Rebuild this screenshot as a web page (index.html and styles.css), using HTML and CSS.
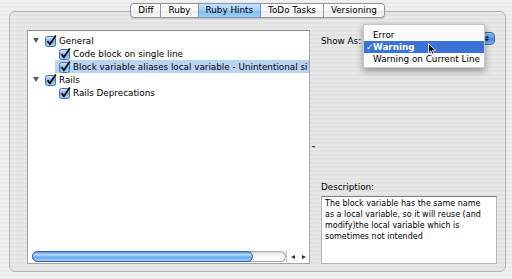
FILE: index.html
```html
<!DOCTYPE html>
<html lang="en">
<head>
  <meta charset="UTF-8" />
  <meta name="viewport" content="width=device-width, initial-scale=1.0"/>
  <title>Ruby Hints</title>
  <link rel="stylesheet" href="styles.css">
</head>
<body>
  <svg class="defs" width="0" height="0">
    <defs>
      <linearGradient id="boxFill" x1="0" y1="0" x2="0" y2="1">
        <stop offset="0" stop-color="#dcedfc"/>
        <stop offset="0.5" stop-color="#78b2ec"/>
        <stop offset="1" stop-color="#aad4fb"/>
      </linearGradient>
      <symbol id="check" viewBox="0 0 12 12">
        <rect x="0.5" y="1.5" width="10" height="10" rx="2" fill="url(#boxFill)" stroke="#4d73a6"/>
        <path d="M2.6 6.2 L4.9 9.3 L10.8 0.6" fill="none" stroke="#000" stroke-width="1.7"/>
      </symbol>
      <symbol id="tri" viewBox="0 0 7 6">
        <path d="M0 0 H7 L3.5 6 Z" fill="#5c5c5c"/>
      </symbol>
    </defs>
  </svg>

  <div class="panel">
    <div class="tabs">
      <span class="tab">Diff</span>
      <span class="tab">Ruby</span>
      <span class="tab selected">Ruby Hints</span>
      <span class="tab">ToDo Tasks</span>
      <span class="tab">Versioning</span>
    </div>

    <div class="content">
      <div class="outline">
        <div class="rows">
          <div class="row">
            <svg class="tri"><use href="#tri"/></svg>
            <svg class="cb"><use href="#check"/></svg>
            <span>General</span>
          </div>
          <div class="row child">
            <svg class="cb"><use href="#check"/></svg>
            <span>Code block on single line</span>
          </div>
          <div class="row child selected">
            <svg class="cb"><use href="#check"/></svg>
            <span>Block variable aliases local variable - Unintentional si</span>
          </div>
          <div class="row">
            <svg class="tri"><use href="#tri"/></svg>
            <svg class="cb"><use href="#check"/></svg>
            <span>Rails</span>
          </div>
          <div class="row child">
            <svg class="cb"><use href="#check"/></svg>
            <span>Rails Deprecations</span>
          </div>
        </div>
        <div class="hscroll">
          <div class="track"><div class="thumb"></div></div>
          <div class="arrows">
            <span class="arr left"></span>
            <span class="arr right"></span>
          </div>
        </div>
      </div>

      <div class="splitter"><span class="grip"></span></div>

      <div class="side">
        <div class="show-as">
          <span class="label">Show As:</span>
          <div class="popup">
            <span class="popup-end"><i class="up"></i><i class="down"></i></span>
            <ul class="menu">
              <li>Error</li>
              <li class="active">Warning</li>
              <li>Warning on Current Line</li>
              <svg class="cursor" viewBox="0 0 8 12">
                <path d="M0.5 0.5 V10 L2.8 7.8 L4.3 11.3 L5.8 10.6 L4.4 7.3 L7.5 7.3 Z" fill="#000" stroke="#fff" stroke-width="0.8"/>
              </svg>
            </ul>
          </div>
        </div>
        <div class="desc">
          <div class="label">Description:</div>
          <div class="desc-box">
            The block variable has the same name<br>
            as a local variable, so it will reuse (and<br>
            modify)the local variable which is<br>
            sometimes not intended
          </div>
        </div>
      </div>
    </div>
  </div>
</body>
</html>
```

FILE: styles.css
```css
body {
  margin: 0;
  width: 512px;
  height: 279px;
  overflow: hidden;
  font-family: "DejaVu Sans", sans-serif;
  font-size: 8.8px;
  color: #000;
  background: repeating-linear-gradient(#f0f0f0 0 2px, #eaeaea 2px 4px);
}
.defs {
  position: absolute;
}
.panel {
  margin: 11px 6px 0 9px;
  height: 261px;
  box-sizing: border-box;
  border: 1px solid #b4b4b4;
  border-radius: 6px;
  background: repeating-linear-gradient(#e8e8e8 0 2px, #e2e2e2 2px 4px);
}

/* segmented tabs */
.tabs {
  display: flex;
  justify-content: center;
  margin-top: -9px;
  height: 15px;
}
.tab {
  padding: 0 7px;
  line-height: 13px;
  border: 1px solid #959595;
  border-left: none;
  background: linear-gradient(#ffffff, #f6f6f6 50%, #ebebeb 51%, #f7f7f7);
  box-shadow: 0 1px 1px rgba(0,0,0,0.12);
}
.tab:first-child {
  border-left: 1px solid #959595;
  border-radius: 4px 0 0 4px;
}
.tab:last-child {
  border-radius: 0 4px 4px 0;
}
.tab.selected {
  background: linear-gradient(#c9e3fb, #a2cdf6 50%, #7db8f0 51%, #a0d0fb);
  border-color: #7f97b4;
}

/* main area */
.content {
  display: flex;
  padding: 12px 0 0 17px;
}
.outline {
  width: 283px;
  height: 234px;
  box-sizing: border-box;
  border: 1px solid #a4a4a4;
  border-top-color: #8c8c8c;
  background: #fff;
  display: flex;
  flex-direction: column;
}
.rows {
  flex: 1;
  padding-top: 3px;
}
.row {
  display: flex;
  align-items: center;
  height: 13px;
  padding-left: 5px;
  white-space: nowrap;
  overflow: hidden;
}
.row.child {
  margin-left: 27px;
  padding-left: 4px;
}
.row.selected {
  background: #b9d4f3;
}
.tri {
  width: 6px;
  height: 5px;
  margin-right: 6px;
  flex: none;
}
.cb {
  width: 12px;
  height: 12px;
  margin-right: 2px;
  flex: none;
}

/* horizontal scroller */
.hscroll {
  display: flex;
  align-items: center;
  height: 11px;
  margin: 0 0 1px 4px;
}
.track {
  width: 255px;
  height: 11px;
  border-radius: 6px;
  background: linear-gradient(#cfcfcf, #f4f4f4 35%, #ffffff);
  box-shadow: inset 0 0 0 1px #a9a9a9;
}
.thumb {
  width: 221px;
  height: 11px;
  box-sizing: border-box;
  border-radius: 6px;
  border: 1px solid #2d5fb8;
  background: linear-gradient(#5b95e4, #b7dafc 30%, #6aa9ef 60%, #a8d6fd);
}
.arrows {
  width: 22px;
  height: 11px;
  display: flex;
  align-items: center;
  justify-content: space-around;
  border-left: 1px solid #c8c8c8;
}
.arr {
  width: 0;
  height: 0;
  border-top: 2.5px solid transparent;
  border-bottom: 2.5px solid transparent;
}
.arr.left {
  border-right: 4px solid #333;
}
.arr.right {
  border-left: 4px solid #333;
}

.splitter {
  width: 11px;
  display: flex;
  align-items: center;
  padding: 0 0 2px 2px;
  box-sizing: border-box;
}
.grip {
  width: 3px;
  height: 1px;
  background: #4a4a4a;
  box-shadow: 0 1px 0 #bdbdbd;
}

/* right side */
.side {
  width: 176px;
  height: 234px;
  display: flex;
  flex-direction: column;
}
.show-as {
  display: flex;
  align-items: flex-start;
  margin-top: 1px;
  height: 17px;
}
.show-as .label {
  width: 42px;
  padding-top: 3px;
  line-height: 14px;
}
.popup {
  position: relative;
  flex: 1;
  margin: 1px 2px 0 0;
  height: 11px;
  border: 1px solid #9a9a9a;
  border-radius: 5px;
  background: linear-gradient(#ffffff, #e9e9e9);
}
.popup-end {
  position: absolute;
  right: -1px;
  top: -1px;
  width: 16px;
  height: 13px;
  border-radius: 0 5px 5px 0;
  background: linear-gradient(#a9d0f6, #4f95e6 50%, #3a86e2 51%, #8cc3f8);
  box-shadow: inset 0 0 0 1px #3d6bb3;
  display: flex;
  flex-direction: column;
  align-items: center;
  justify-content: center;
  gap: 1px;
}
.popup-end i {
  width: 0;
  height: 0;
  border-left: 2px solid transparent;
  border-right: 2px solid transparent;
}
.popup-end .up {
  border-bottom: 2.5px solid #111;
}
.popup-end .down {
  border-top: 2.5px solid #111;
}
.menu {
  position: absolute;
  left: -1px;
  top: -9px;
  width: 122px;
  box-sizing: border-box;
  list-style: none;
  margin: 0;
  padding: 4px 0 2px;
  background: #fbfbfb;
  border: 1px solid #c6c6c6;
  box-shadow: 0 3px 7px rgba(0,0,0,0.38);
  z-index: 2;
}
.menu li {
  position: relative;
  height: 12px;
  line-height: 12px;
  padding-left: 9px;
  white-space: nowrap;
}
.menu li.active {
  background: #3a72d6;
  color: #fff;
  font-weight: bold;
}
.menu li.active::before {
  content: "✓";
  position: absolute;
  left: 2px;
  top: 0;
}
.cursor {
  position: absolute;
  left: 64px;
  top: 18px;
  width: 8px;
  height: 12px;
}

.desc {
  margin-top: auto;
}
.desc .label {
  line-height: 12px;
  margin-bottom: 3px;
}
.desc-box {
  height: 68px;
  box-sizing: border-box;
  border: 1px solid #b4b4b4;
  border-top-color: #7e7e7e;
  background: #fff;
  padding: 1px 3px;
  font-size: 8px;
  line-height: 11px;
  white-space: nowrap;
}
```
